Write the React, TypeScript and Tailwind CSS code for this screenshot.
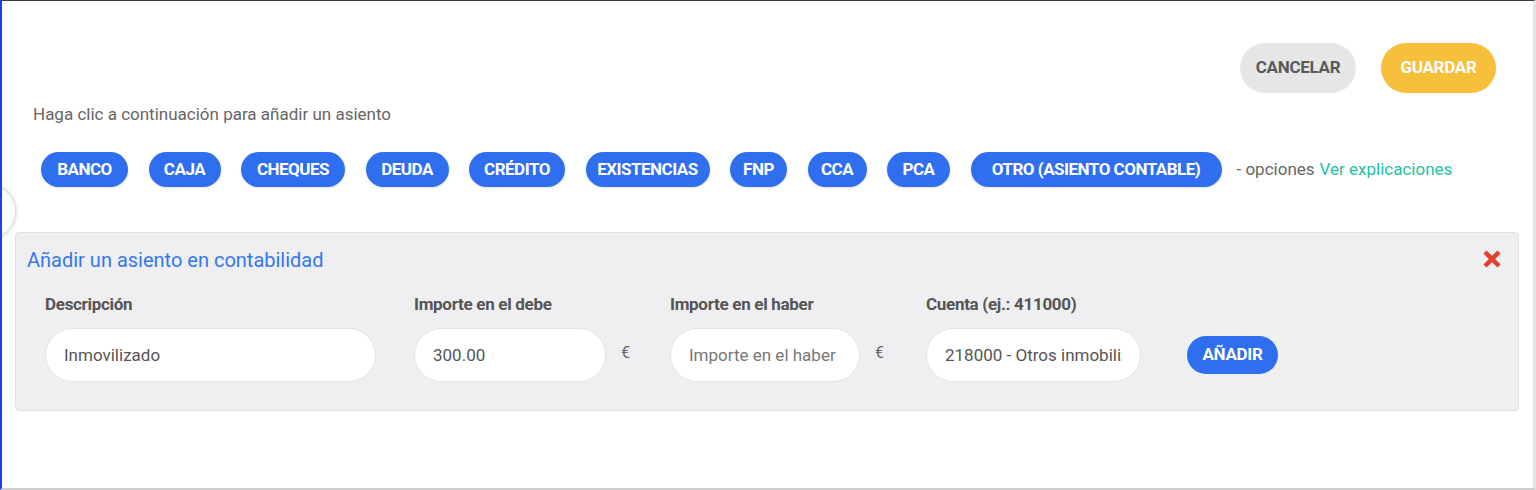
import { useState } from "react";

const chips: [string, string][] = [
  ["BANCO", "w-[87px]"],
  ["CAJA", "w-[72px]"],
  ["CHEQUES", "w-[104px]"],
  ["DEUDA", "w-[83px]"],
  ["CRÉDITO", "w-[96px]"],
  ["EXISTENCIAS", "w-[124px]"],
  ["FNP", "w-[57px]"],
  ["CCA", "w-[59px]"],
  ["PCA", "w-[63px]"],
];

function Chip({ label, className = "" }: { label: string; className?: string }) {
  return (
    <button
      className={`h-[35px] rounded-full bg-[#306ef0] text-[17px] font-bold tracking-[-0.5px] text-white shadow-[0_1px_3px_rgba(0,0,0,0.12)] ${className}`}
    >
      {label}
    </button>
  );
}

function Field({ label, width, value, placeholder, euro }: { label: string; width: string; value?: string; placeholder?: string; euro?: boolean }) {
  return (
    <div className="flex flex-col gap-[12px]">
      <span className="text-[17px] leading-6 font-bold text-[#555] tracking-[-0.3px]">{label}</span>
      <div className="flex items-center">
        <input
          defaultValue={value}
          placeholder={placeholder}
          className={`${width} h-[54px] rounded-full border border-[#e4e4e4] bg-white px-[18px] text-[17px] text-[#555] placeholder:text-[#777] outline-none`}
        />
        {euro ? <span className="ml-[15px] -mt-[4px] text-[16px] text-[#666]">€</span> : null}
      </div>
    </div>
  );
}

export default function App() {
  const [open] = useState(true);

  return (
    <div className="relative h-[490px] w-full overflow-hidden border-t border-t-[#3a3a3a] border-l-2 border-l-[#1d3df5] border-r-[3px] border-r-[#e4e4e4] border-b-2 border-b-[#cfcfcf] bg-white font-['Roboto',sans-serif]">
      <div className="absolute -left-[40px] top-[184px] h-[53px] w-[53px] rounded-full bg-white shadow-[0_0_5px_rgba(0,0,0,0.3)]" />

      <div className="flex justify-end gap-[25px] pt-[42px] pr-[37px]">
        <button className="h-[50px] w-[116px] rounded-full bg-[#e6e6e6] text-[17px] font-bold tracking-[-0.3px] text-[#595959]">CANCELAR</button>
        <button className="h-[50px] w-[115px] rounded-full bg-[#f6c03a] text-[17px] font-bold tracking-[-0.3px] text-white">GUARDAR</button>
      </div>

      <p className="mt-[9px] pl-[31px] text-[17px] leading-6 text-[#666]">Haga clic a continuación para añadir un asiento</p>

      <div className="mt-[26px] flex items-center pl-[39px]">
        <div className="flex items-center gap-[20.5px]">
          {chips.map(([c, w]) => (
            <Chip key={c} label={c} className={w} />
          ))}
          <Chip label="OTRO (ASIENTO CONTABLE)" className="w-[251px]" />
        </div>
        <span className="ml-[15px] text-[17px] text-[#666]">- opciones</span>
        <a className="ml-[5px] text-[17px] text-[#1fc3a3]">Ver explicaciones</a>
      </div>

      {open ? (
        <section className="mt-[45px] ml-[13px] mr-[14px] rounded-[4px] border border-[#e0e0e2] bg-[#efeff1] pb-[28px] pl-[11px] pr-[16px] pt-[13px]">
          <div className="flex items-start justify-between">
            <h2 className="text-[20px] leading-7 text-[#3478ee]">Añadir un asiento en contabilidad</h2>
            <svg width="20" height="20" viewBox="0 0 20 20" className="mt-[3px]">
              <path d="M3 3 L17 17 M17 3 L3 17" stroke="#e2402e" strokeWidth="4.5" strokeLinecap="butt" />
            </svg>
          </div>
          <div className="mt-[18px] flex items-end pl-[18px]">
            <Field label="Descripción" width="w-[331px]" value="Inmovilizado" />
            <div className="ml-[38px]">
              <Field label="Importe en el debe" width="w-[192px]" value="300.00" euro />
            </div>
            <div className="ml-[40px]">
              <Field label="Importe en el haber" width="w-[190px]" placeholder="Importe en el haber" euro />
            </div>
            <div className="ml-[42px]">
              <Field label="Cuenta (ej.: 411000)" width="w-[215px]" value="218000 - Otros inmobilizados" />
            </div>
            <button className="mb-[8px] ml-[46px] h-[38px] w-[91px] rounded-full bg-[#306ef0] text-[17px] font-bold tracking-[-0.3px] text-white">AÑADIR</button>
          </div>
        </section>
      ) : null}
    </div>
  );
}
